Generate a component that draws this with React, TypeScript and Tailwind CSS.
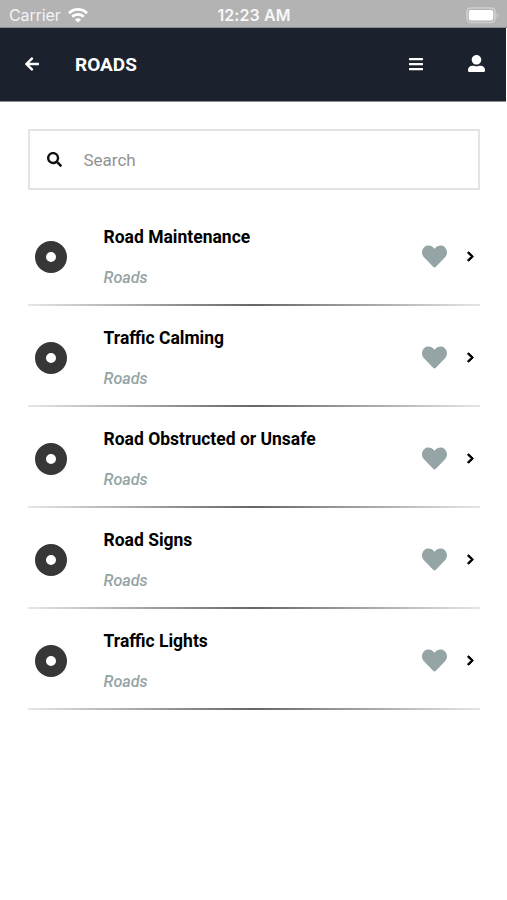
import React from 'react';
import {
  FaArrowLeft,
  FaBars,
  FaChevronRight,
  FaHeart,
  FaSearch,
  FaUserAlt,
} from 'react-icons/fa';

interface Service {
  id: number;
  title: string;
  category: string;
}

const services: Service[] = [
  { id: 1, title: 'Road Maintenance', category: 'Roads' },
  { id: 2, title: 'Traffic Calming', category: 'Roads' },
  { id: 3, title: 'Road Obstructed or Unsafe', category: 'Roads' },
  { id: 4, title: 'Road Signs', category: 'Roads' },
  { id: 5, title: 'Traffic Lights', category: 'Roads' },
];

function StatusBar() {
  return (
    <div className="grid h-[28px] grid-cols-[1fr_auto_1fr] items-center border-b border-[#8b8e91] bg-[#b3b3b3] pt-[2px] pr-[8px] pl-[9px] font-['Inter',sans-serif] text-white">
      <div className="flex items-center gap-[7px]">
        <span className="text-[16px] leading-[26px] tracking-[-0.1px] text-[#f4f4f4]">Carrier</span>
        <svg width="20" height="15" viewBox="0 0 20 15" fill="none" stroke="white" strokeWidth="2.7">
          <path d="M1 5.2C6 .2 14 .2 19 5.2" />
          <path d="M4.2 8.7C7.4 5.5 12.6 5.5 15.8 8.7" />
          <path d="M10 14.5 6.9 11.4C8.6 9.8 11.4 9.8 13.1 11.4Z" fill="white" stroke="none" />
        </svg>
      </div>
      <span className="text-[16px] leading-[26px] font-semibold tracking-[0.1px] text-[#f8f8f8]">12:23 AM</span>
      <div className="flex items-center justify-end">
        <svg width="33" height="17" viewBox="0 0 33 17">
          <rect x="1" y="1" width="28" height="14.5" rx="4" fill="none" stroke="#d0d0d0" strokeWidth="1.6" />
          <rect x="2.8" y="3" width="24.4" height="10.5" rx="2" fill="white" />
          <path d="M30.8 5.8c1.6.6 1.6 4.4 0 5z" fill="#d0d0d0" />
        </svg>
      </div>
    </div>
  );
}

function Header() {
  return (
    <header className="mr-px flex h-[74px] items-center border-b border-[#8b8e91] bg-[#1c222d] pr-[21px] pb-[2px] pl-[23.5px] text-white">
      <FaArrowLeft size={16} />
      <h1 className="mt-[3px] ml-[35.5px] text-[19px] font-bold">ROADS</h1>
      <FaBars size={16} className="ml-auto" />
      <FaUserAlt size={17} className="ml-[44px]" />
    </header>
  );
}

function ServiceRow({ service }: { service: Service }) {
  return (
    <li>
      <div className="flex h-[99px] items-center pt-[4px] pr-[4px] pl-[7px]">
        {/* Ring marker */}
        <span className="size-[32px] rounded-full border-[11px] border-[#373737]" />
        <div className="mt-[2px] ml-[36.5px] flex flex-col gap-[17px]">
          <p className="text-[17.5px] leading-[24px] font-bold text-black">{service.title}</p>
          <p className="text-[16.2px] leading-[24px] font-medium text-[#95a5a6] italic">{service.category}</p>
        </div>
        <FaHeart size={25} className="mb-px ml-auto text-[#95a5a6]" />
        <FaChevronRight
          size={11}
          className="ml-[18.5px] overflow-visible text-black"
          stroke="currentColor"
          strokeWidth={44}
        />
      </div>
      <div className="h-[2px] bg-linear-to-r/srgb from-[#e6e6e6] via-[#666666] to-[#e6e6e6]" />
    </li>
  );
}

export default function App() {
  return (
    <div className="min-h-screen bg-white font-['Roboto',sans-serif]">
      <StatusBar />
      <Header />
      <main className="pt-[27px] pr-[27px] pl-[28px]">
        <div className="flex h-[61px] items-center border-2 border-[#e4e4e4] pl-[17px]">
          <FaSearch size={15} className="mb-px text-[#111111]" />
          <input
            type="text"
            placeholder="Search"
            className="mt-[2px] ml-[21.5px] flex-1 text-[17px] outline-none placeholder:text-[#929292]"
          />
        </div>
        <ul className="mt-[15px]">
          {services.map((service) => (
            <ServiceRow key={service.id} service={service} />
          ))}
        </ul>
      </main>
    </div>
  );
}
